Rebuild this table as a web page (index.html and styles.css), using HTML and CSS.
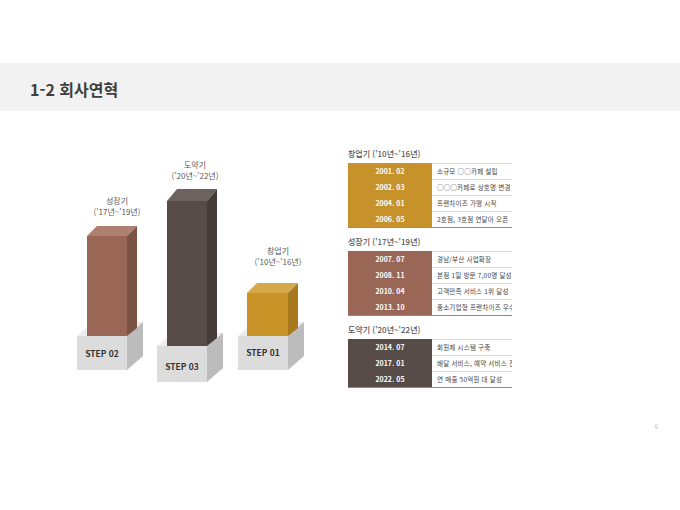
FILE: index.html
```html
<!DOCTYPE html>
<html lang="ko">
<head>
<meta charset="utf-8">
<title>회사연혁</title>
<link rel="stylesheet" href="styles.css">
</head>
<body>
<div class="page">
  <div class="header"><h1 class="title">1-2 회사연혁</h1></div>
  <div class="content">
    <svg class="chart" width="260" height="260" viewBox="60 140 260 260" xmlns="http://www.w3.org/2000/svg">
      <!-- STEP 02 -->
      <text class="lbl" x="117" y="204">성장기</text>
      <text class="lbl" x="117" y="215">('17년~'19년)</text>
      <polygon class="ped-top" points="77,336 93,322 143,322 127,336"/>
      <polygon class="ped-side" points="127,336 143,322 143,356 127,370"/>
      <rect class="ped-front" x="77" y="336" width="50" height="34"/>
      <polygon fill="#ad8070" points="87,236 97,226 137,226 127,236"/>
      <polygon fill="#7c5244" points="127,236 137,226 137,328 127,336"/>
      <rect fill="#9a6756" x="87" y="236" width="40" height="100"/>
      <text class="step" x="102" y="357">STEP 02</text>

      <!-- STEP 03 -->
      <text class="lbl" x="195" y="168">도약기</text>
      <text class="lbl" x="195" y="179">('20년~'22년)</text>
      <polygon class="ped-top" points="157,346 173,333 223,333 207,346"/>
      <polygon class="ped-side" points="207,346 223,333 223,368 207,382"/>
      <rect class="ped-front" x="157" y="346" width="50" height="36"/>
      <polygon fill="#6d625d" points="167,201 177,189 217,189 207,201"/>
      <polygon fill="#453b38" points="207,201 217,189 217,338 207,346"/>
      <rect fill="#574c47" x="167" y="201" width="40" height="145"/>
      <text class="step" x="182" y="370">STEP 03</text>

      <!-- STEP 01 -->
      <text class="lbl" x="278" y="254">창업기</text>
      <text class="lbl" x="278" y="265">('10년~'16년)</text>
      <polygon class="ped-top" points="238,336 254,322 304,322 288,336"/>
      <polygon class="ped-side" points="288,336 304,322 304,356 288,370"/>
      <rect class="ped-front" x="238" y="336" width="50" height="34"/>
      <polygon fill="#d6a84a" points="247,293 257,283 298,283 288,293"/>
      <polygon fill="#a7781c" points="288,293 298,283 298,328 288,336"/>
      <rect fill="#c99328" x="247" y="293" width="41" height="43"/>
      <text class="step" x="263" y="356">STEP 01</text>
    </svg>

    <div class="timeline">
      <div class="section">
        <div class="sec-title">창업기 ('10년~'16년)</div>
        <div class="table">
          <div class="row"><div class="date gold">2001. 02</div><div class="desc">소규모 ○○카페 설립</div></div>
          <div class="row"><div class="date gold">2002. 03</div><div class="desc">○○○카페로 상호명 변경</div></div>
          <div class="row"><div class="date gold">2004. 01</div><div class="desc">프랜차이즈 가맹 시작</div></div>
          <div class="row"><div class="date gold">2006. 05</div><div class="desc">2호점, 3호점 연달아 오픈</div></div>
        </div>
      </div>
      <div class="section">
        <div class="sec-title">성장기 ('17년~'19년)</div>
        <div class="table">
          <div class="row"><div class="date brown">2007. 07</div><div class="desc">경남/부산 사업확장</div></div>
          <div class="row"><div class="date brown">2008. 11</div><div class="desc">본점 1일 방문 7,00명 달성</div></div>
          <div class="row"><div class="date brown">2010. 04</div><div class="desc">고객만족 서비스 1위 달성</div></div>
          <div class="row"><div class="date brown">2013. 10</div><div class="desc">중소기업형 프랜차이즈 우수상</div></div>
        </div>
      </div>
      <div class="section">
        <div class="sec-title">도약기 ('20년~'22년)</div>
        <div class="table">
          <div class="row"><div class="date dark">2014. 07</div><div class="desc">회원제 시스템 구축</div></div>
          <div class="row"><div class="date dark">2017. 01</div><div class="desc">배달 서비스, 예약 서비스 진행</div></div>
          <div class="row"><div class="date dark">2022. 05</div><div class="desc">연 매출 50억원 대 달성</div></div>
        </div>
      </div>
    </div>
  </div>
  <div class="footer">6</div>
</div>
</body>
</html>
```

FILE: styles.css
```css
* { box-sizing: border-box; }
html, body { margin: 0; padding: 0; background: #ffffff; }
body {
  font-family: "Noto Sans CJK KR", "Noto Sans", "Liberation Sans", sans-serif;
  color: #404040;
}
.page { width: 680px; height: 510px; overflow: hidden; }

.header {
  margin-top: 63px;
  height: 48px;
  background: #f2f2f2;
  padding: 3px 0 0 30px;
  display: flex;
  align-items: center;
}
.title {
  margin: 0;
  font-size: 16px;
  font-weight: 700;
  color: #3f3f3f;
  letter-spacing: 0;
}

.content {
  display: flex;
  align-items: flex-start;
  margin-top: 29px;
  padding-left: 60px;
}
.chart { display: block; flex: none; }
.chart .lbl {
  font-size: 8px;
  fill: #595959;
  text-anchor: middle;
  font-family: "Noto Sans CJK KR", "Noto Sans", sans-serif;
}
.chart .step {
  font-size: 8.5px;
  font-weight: 700;
  fill: #333333;
  text-anchor: middle;
  font-family: "Noto Sans CJK KR", "Noto Sans", sans-serif;
}
.ped-front { fill: #dcdcdc; }
.ped-top { fill: #ececec; }
.ped-side { fill: #bcbcbc; }

.timeline {
  width: 164px;
  margin-left: 28px;
  padding-top: 6px;
}
.section + .section { margin-top: 6px; }
.sec-title {
  height: 16px;
  line-height: 16px;
  font-size: 8px;
  font-weight: 500;
  color: #555555;
  margin-bottom: 1px;
}
.table { border-bottom: 1px solid #8c8c8c; }
.row {
  display: grid;
  grid-template-columns: 84px 1fr;
  height: 16px;
}
.date {
  color: #ffffff;
  font-size: 7px;
  font-weight: 700;
  text-align: center;
  line-height: 16px;
}
.gold { background: #c69229; }
.brown { background: #9a6756; }
.dark { background: #574c47; }
.desc {
  border-top: 1px solid #dadada;
  font-size: 6.5px;
  letter-spacing: 0.2px;
  line-height: 14px;
  padding-left: 5px;
  color: #444444;
  white-space: nowrap;
  overflow: hidden;
}

.footer {
  margin-top: 23px;
  text-align: right;
  padding-right: 22px;
  font-size: 6px;
  line-height: 8px;
  color: #bfbfbf;
}
```
